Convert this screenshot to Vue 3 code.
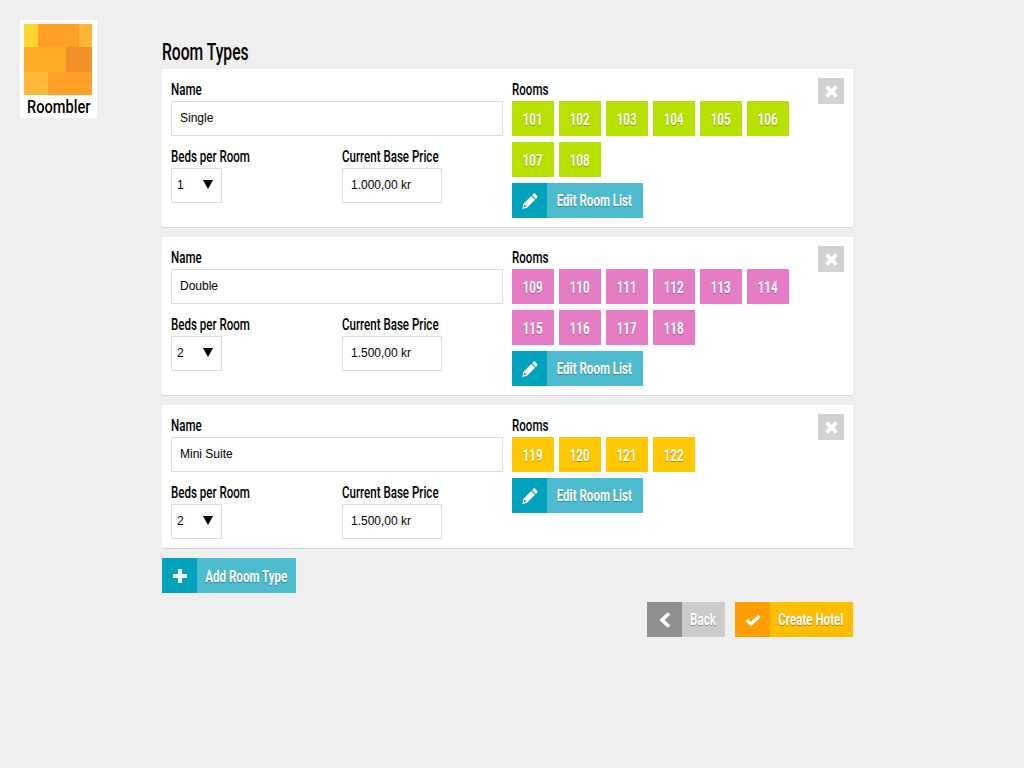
<script setup>
const types = [
  { name: 'Single', beds: 1, price: '1.000,00 kr', color: 'lime', rooms: [101,102,103,104,105,106,107,108] },
  { name: 'Double', beds: 2, price: '1.500,00 kr', color: 'pink', rooms: [109,110,111,112,113,114,115,116,117,118] },
  { name: 'Mini Suite', beds: 2, price: '1.500,00 kr', color: 'amber', rooms: [119,120,121,122] },
]
</script>

<template>
  <div class="page">
    <div class="logo">
      <svg class="logo-art" width="68" height="71" viewBox="0 0 68 71">
        <rect x="0" y="0" width="14" height="23" fill="#ffd530" />
        <rect x="14" y="0" width="41" height="23" fill="#ff9f27" />
        <rect x="55" y="0" width="13" height="23" fill="#ffb73a" />
        <rect x="0" y="23" width="42" height="25" fill="#ffad28" />
        <rect x="42" y="23" width="26" height="25" fill="#f28f29" />
        <rect x="0" y="48" width="24" height="23" fill="#ffb73a" />
        <rect x="24" y="48" width="44" height="23" fill="#ff9f27" />
      </svg>
      <div class="logo-name"><span class="nar">Roombler</span></div>
    </div>
    <main class="main">
      <h1 class="title"><span class="nar">Room Types</span></h1>
      <section v-for="t in types" :key="t.name" class="card">
        <div class="left">
          <label class="lbl"><span class="nar">Name</span></label>
          <input class="field name" :value="t.name" />
          <div class="sub">
            <div class="beds">
              <label class="lbl"><span class="nar">Beds per Room</span></label>
              <div class="select"><span>{{ t.beds }}</span><i class="tri"></i></div>
            </div>
            <div>
              <label class="lbl"><span class="nar">Current Base Price</span></label>
              <input class="field price" :value="t.price" />
            </div>
          </div>
        </div>
        <div class="right">
          <label class="lbl"><span class="nar">Rooms</span></label>
          <div class="rooms">
            <div v-for="r in t.rooms" :key="r" class="room" :class="t.color"><span class="nar-c">{{ r }}</span></div>
          </div>
          <button class="btn teal">
            <span class="ico">
              <svg width="16" height="16" viewBox="0 0 16 16"><path fill="#fff" d="M11.600.6a1 1 0 0 1 1.300 0l2.500 2.500a1 1 0 0 1 0 1.300l-1.500 1.500-3.800-3.800zM9.200 3l3.800 3.800-7.900 7.900L.4 16 1.300 11zM2.300 11.600l-.5 2.600 2.600-.5z"/></svg>
            </span>
            <span class="txt"><span class="nar-c">Edit Room List</span></span>
          </button>
        </div>
        <button class="close" aria-label="Remove">
          <svg width="13" height="13" viewBox="0 0 12 12"><path stroke="#fff" stroke-width="3.400" d="M1.500 1.500l9 9M10.500 1.500l-9 9"/></svg>
        </button>
      </section>
      <button class="btn teal add">
        <span class="ico">
          <svg width="14" height="14" viewBox="0 0 14 14"><path stroke="#fff" stroke-width="4" d="M7 0v14M0 7h14"/></svg>
        </span>
        <span class="txt"><span class="nar-c">Add Room Type</span></span>
      </button>
      <div class="actions">
        <button class="btn grey">
          <span class="ico">
            <svg width="12" height="16" viewBox="0 0 12 16"><path fill="none" stroke="#fff" stroke-width="3.600" d="M10 1.500 3 8l7 6.500"/></svg>
          </span>
          <span class="txt"><span class="nar-c">Back</span></span>
        </button>
        <button class="btn orange">
          <span class="ico">
            <svg width="16" height="12" viewBox="0 0 16 12"><path fill="none" stroke="#fff" stroke-width="3.400" d="M1.500 6 6 10 14.500 2"/></svg>
          </span>
          <span class="txt"><span class="nar-c">Create Hotel</span></span>
        </button>
      </div>
    </main>
  </div>
</template>

<style>
html, body { background: #efefef; }
</style>

<style scoped>
.page {
  display: flex;
  align-items: flex-start;
  padding: 20px;
  min-height: 728px;
  background: #efefef;
  font-family: "Roboto", "Liberation Sans", sans-serif;
  color: #000;
}
.nar, .nar-c { display: inline-block; white-space: nowrap; }
.nar { transform: scaleX(0.68); transform-origin: 0 50%; }
.nar-c { transform: scaleX(0.68); transform-origin: 50% 50%; }
.logo {
  flex: none;
  width: 77px;
  height: 98px;
  margin-right: 65px;
  background: #fff;
  padding: 4px 4px 0;
  box-sizing: border-box;
  display: flex;
  flex-direction: column;
  align-items: flex-start;
}
.logo-art { display: block; }
.logo-name {
  width: 69px;
  margin-top: 2px;
  padding-left: 3px;
  box-sizing: border-box;
  font-size: 19px;
  line-height: 20px;
  font-weight: 500;
}
.logo-name .nar { transform: scaleX(0.77); }
.main { width: 691px; }
.title {
  margin: 0;
  height: 49px;
  padding-top: 20px;
  box-sizing: border-box;
  font-size: 23px;
  line-height: 26px;
  font-weight: 500;
}
.card {
  display: flex;
  background: #fff;
  border-bottom: 1px solid #d8d8d8;
  padding: 9px;
  margin-bottom: 9px;
  box-sizing: border-box;
}
.left { width: 332px; margin-right: 9px; flex: none; }
.lbl {
  display: block;
  height: 23px;
  font-size: 17px;
  line-height: 23px;
  font-weight: 500;
}
.field, .select {
  display: block;
  box-sizing: border-box;
  height: 35px;
  border: 1px solid #ddd;
  background: #fff;
  font-family: "Liberation Sans", sans-serif;
  font-size: 12px;
  color: #000;
  outline: none;
}
.field { padding: 0 8px 2px; }
.name { width: 332px; }
.price { width: 100px; }
.sub { display: flex; margin-top: 9px; }
.beds { width: 171px; }
.select {
  width: 51px;
  padding: 0 8px 2px 5px;
  display: flex;
  align-items: center;
  justify-content: space-between;
}
.tri {
  width: 0;
  height: 0;
  border-left: 5px solid transparent;
  border-right: 5px solid transparent;
  border-top: 9px solid #000;
}
.right { width: 296px; flex: none; }
.rooms { display: flex; flex-wrap: wrap; gap: 6px 5px; width: 290px; margin-bottom: 6px; }
.room {
  width: 42px;
  height: 35px;
  color: #fff;
  font-size: 17px;
  font-weight: 700;
  line-height: 37px;
  text-align: center;
  text-shadow: 0 1px 1px rgba(0, 0, 0, 0.3);
}
.lime { background: #b7e200; }
.pink { background: #e67cc3; }
.amber { background: #ffc800; }
.btn {
  display: inline-flex;
  height: 35px;
  padding: 0;
  border: 0;
  font-family: inherit;
  font-size: 17px;
  font-weight: 700;
  color: #fff;
  text-shadow: 0 1px 1px rgba(0, 0, 0, 0.3);
  vertical-align: top;
}
.ico { flex: none; width: 35px; height: 35px; display: flex; align-items: center; justify-content: center; }
.txt { flex: 1; min-width: 0; line-height: 35px; white-space: nowrap; display: flex; justify-content: center; padding-right: 1px; }
.teal { background: #4dbccf; }
.teal .ico { background: #00a3bb; }
.right .btn { width: 131px; }
.add { width: 134px; display: flex; }
.add .txt { line-height: 37px; padding-right: 0; }
.grey { background: #cbcbcb; width: 78px; }
.grey .ico { background: #8f8f8f; }
.orange { background: #ffbe00; width: 118px; }
.orange .ico { background: #ff9e00; }
.actions { display: flex; justify-content: flex-end; gap: 10px; margin-top: 9px; }
.close {
  flex: none;
  width: 26px;
  height: 26px;
  padding: 0;
  border: 0;
  background: #d2d2d2;
  display: flex;
  align-items: center;
  justify-content: center;
  margin-left: auto;
}
</style>
